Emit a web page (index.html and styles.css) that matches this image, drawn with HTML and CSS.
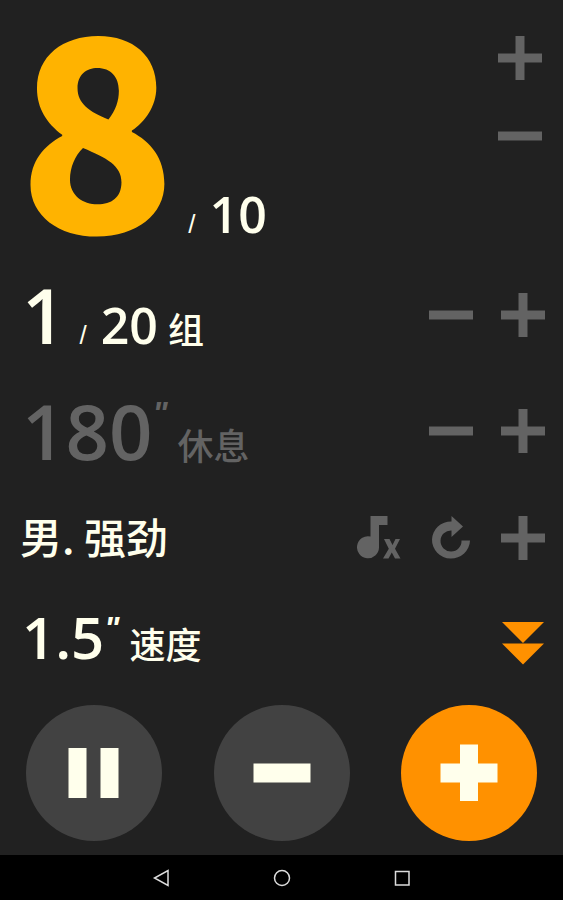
FILE: index.html
```html
<!DOCTYPE html>
<html lang="zh-CN">

<head>
    <meta charset="UTF-8">
    <meta name="viewport" content="width=device-width, initial-scale=1.0">
    <title>计数器</title>
    <link rel="stylesheet" href="styles.css">
</head>

<body>
    <main class="counter">
        <section class="row reps">
            <div class="value">
                <span class="current">8</span>
                <span class="slash">/</span>
                <span class="total">10</span>
            </div>
            <div class="controls stacked">
                <button class="icon-btn" aria-label="增加次数"><svg viewBox="0 0 44 44"><path d="M0 17.5h17.5V0h9v17.5H44v9H26.5V44h-9V26.5H0z"/></svg></button>
                <button class="icon-btn" aria-label="减少次数"><svg viewBox="0 0 44 44"><path d="M0 17.5h44v9H0z"/></svg></button>
            </div>
        </section>

        <section class="row sets">
            <div class="value">
                <span class="number">1</span>
                <span class="slash">/</span>
                <span class="total">20</span>
                <span class="unit">组</span>
            </div>
            <div class="controls">
                <button class="icon-btn" aria-label="减少组数"><svg viewBox="0 0 44 44"><path d="M0 17.5h44v9H0z"/></svg></button>
                <button class="icon-btn" aria-label="增加组数"><svg viewBox="0 0 44 44"><path d="M0 17.5h17.5V0h9v17.5H44v9H26.5V44h-9V26.5H0z"/></svg></button>
            </div>
        </section>

        <section class="row rest">
            <div class="value">
                <span class="number">180</span>
                <span class="prime">"</span>
                <span class="unit">休息</span>
            </div>
            <div class="controls">
                <button class="icon-btn" aria-label="减少休息"><svg viewBox="0 0 44 44"><path d="M0 17.5h44v9H0z"/></svg></button>
                <button class="icon-btn" aria-label="增加休息"><svg viewBox="0 0 44 44"><path d="M0 17.5h17.5V0h9v17.5H44v9H26.5V44h-9V26.5H0z"/></svg></button>
            </div>
        </section>

        <section class="row voice">
            <div class="value">
                <span class="name">男. 强劲</span>
            </div>
            <div class="controls">
                <button class="icon-btn" aria-label="关闭音乐">
                    <svg viewBox="0 0 44 44">
                        <path d="M13.500 0h17v9h-8.500v22.500a11 11 0 1 1-8.500-11z"/>
                        <path d="M27 23h5.500l3 6 3-6H43l-5 9.700 5.500 9.800H38l-3.200-6-3.300 6H26l5.800-9.800z"/>
                    </svg>
                </button>
                <button class="icon-btn" aria-label="重置">
                    <svg viewBox="0 0 44 44">
                        <path d="M22.500 0L34 10.500 22.500 21v-6.500A10.500 10.500 0 1 0 32.500 24.500h8.500A19 18.500 0 1 1 22.500 5.500z"/>
                    </svg>
                </button>
                <button class="icon-btn" aria-label="添加声音"><svg viewBox="0 0 44 44"><path d="M0 17.5h17.5V0h9v17.5H44v9H26.5V44h-9V26.5H0z"/></svg></button>
            </div>
        </section>

        <section class="row speed">
            <div class="value">
                <span class="number small">1.5</span>
                <span class="prime">"</span>
                <span class="unit">速度</span>
            </div>
            <div class="controls">
                <button class="icon-btn accent" aria-label="展开"><svg viewBox="0 0 44 44"><path d="M1 1h42L22 22zM1 22.500h42L22 43.500z"/></svg></button>
            </div>
        </section>

        <div class="actions">
            <button class="round-btn" aria-label="暂停"><svg viewBox="0 0 136 136"><path d="M42.500 43h18v50h-18zM74.500 43h18v50h-18z"/></svg></button>
            <button class="round-btn" aria-label="减一"><svg viewBox="0 0 136 136"><path d="M39.500 58.500h57v19h-57z"/></svg></button>
            <button class="round-btn plus" aria-label="加一"><svg viewBox="0 0 136 136"><path d="M39.500 58.500H59V39.500h18v19h19.500v19H77V96H59V77.500H39.500z"/></svg></button>
        </div>
    </main>

    <nav class="navbar">
        <button class="nav-btn" aria-label="返回"><svg viewBox="0 0 20 20"><path d="M16 2.500v15L2.500 10z"/></svg></button>
        <button class="nav-btn" aria-label="主页"><svg viewBox="0 0 20 20"><circle cx="10" cy="10" r="7.500"/></svg></button>
        <button class="nav-btn" aria-label="最近任务"><svg viewBox="0 0 20 20"><path d="M3.500 3.500h13.500v13.500H3.500z"/></svg></button>
    </nav>
</body>

</html>
```
FILE: styles.css
```css
:root {
    --bg: #212121;
    --ivory: #ffffec;
    --muted: #636363;
    --amber: #ffb300;
    --orange: #ff9100;
}

* {
    box-sizing: border-box;
}

body {
    margin: 0;
    min-height: 100vh;
    display: flex;
    flex-direction: column;
    background: var(--bg);
    color: var(--ivory);
    font-family: "Open Sans", "Noto Sans CJK SC", sans-serif;
    font-weight: 600;
    line-height: 1;
}

button {
    padding: 0;
    border: 0;
    background: none;
    color: inherit;
    cursor: pointer;
}

svg {
    display: block;
    width: 100%;
    height: 100%;
    fill: currentColor;
}

.counter {
    flex: 1;
}

.row {
    display: flex;
    justify-content: space-between;
    align-items: center;
    min-height: 116px;
    padding: 0 18px 0 22px;
}

.value {
    display: flex;
    align-items: baseline;
}

.controls {
    display: flex;
    gap: 28px;
    color: var(--muted);
}

.icon-btn {
    width: 44px;
    height: 44px;
}

.accent {
    color: var(--orange);
}

/* reps */
.reps {
    align-items: flex-start;
    min-height: 257px;
    padding-right: 21px;
    padding-left: 18px;
}

.current {
    color: var(--amber);
    font-family: "Noto Sans CJK SC", sans-serif;
    font-size: 260px;
    font-weight: 900;
    line-height: 240px;
}

.stacked {
    flex-direction: column;
    gap: 34px;
    padding-top: 36px;
}

.slash {
    margin: 0 14px;
    font-family: "Liberation Sans", sans-serif;
    font-size: 26px;
    font-weight: 400;
}

.reps .slash {
    margin-left: 12px;
}

.total {
    font-size: 50px;
}

.number {
    font-size: 76px;
}

.small {
    font-size: 58px;
}

.unit {
    margin-left: 10px;
    font-family: "Noto Sans CJK SC", sans-serif;
    font-size: 36px;
    font-weight: 500;
}

.prime {
    align-self: flex-start;
    padding-top: 4px;
    font-family: "Liberation Sans", sans-serif;
    font-size: 32px;
    font-style: italic;
}

.prime + .unit {
    margin-left: 10px;
}

.rest {
    color: var(--muted);
}

.voice {
    min-height: 98px;
    padding-left: 20px;
}

.name {
    padding-bottom: 4px;
    font-family: "Noto Sans CJK SC", sans-serif;
    font-size: 42px;
    font-weight: 500;
}

.speed {
    min-height: 112px;
}

.speed .value {
    padding-bottom: 12px;
}

.actions {
    display: flex;
    justify-content: space-between;
    padding: 6px 26px 14px;
}

.round-btn {
    width: 136px;
    height: 136px;
    border-radius: 50%;
    background: #424242;
}

.plus {
    background: var(--orange);
}

/* system bar */
.navbar {
    display: flex;
    justify-content: center;
    align-items: center;
    gap: 100px;
    height: 45px;
    background: #000;
}

.nav-btn {
    width: 20px;
    height: 20px;
    color: #ddd;
}

.nav-btn svg {
    fill: none;
    stroke: currentColor;
    stroke-width: 1.5;
}
```
